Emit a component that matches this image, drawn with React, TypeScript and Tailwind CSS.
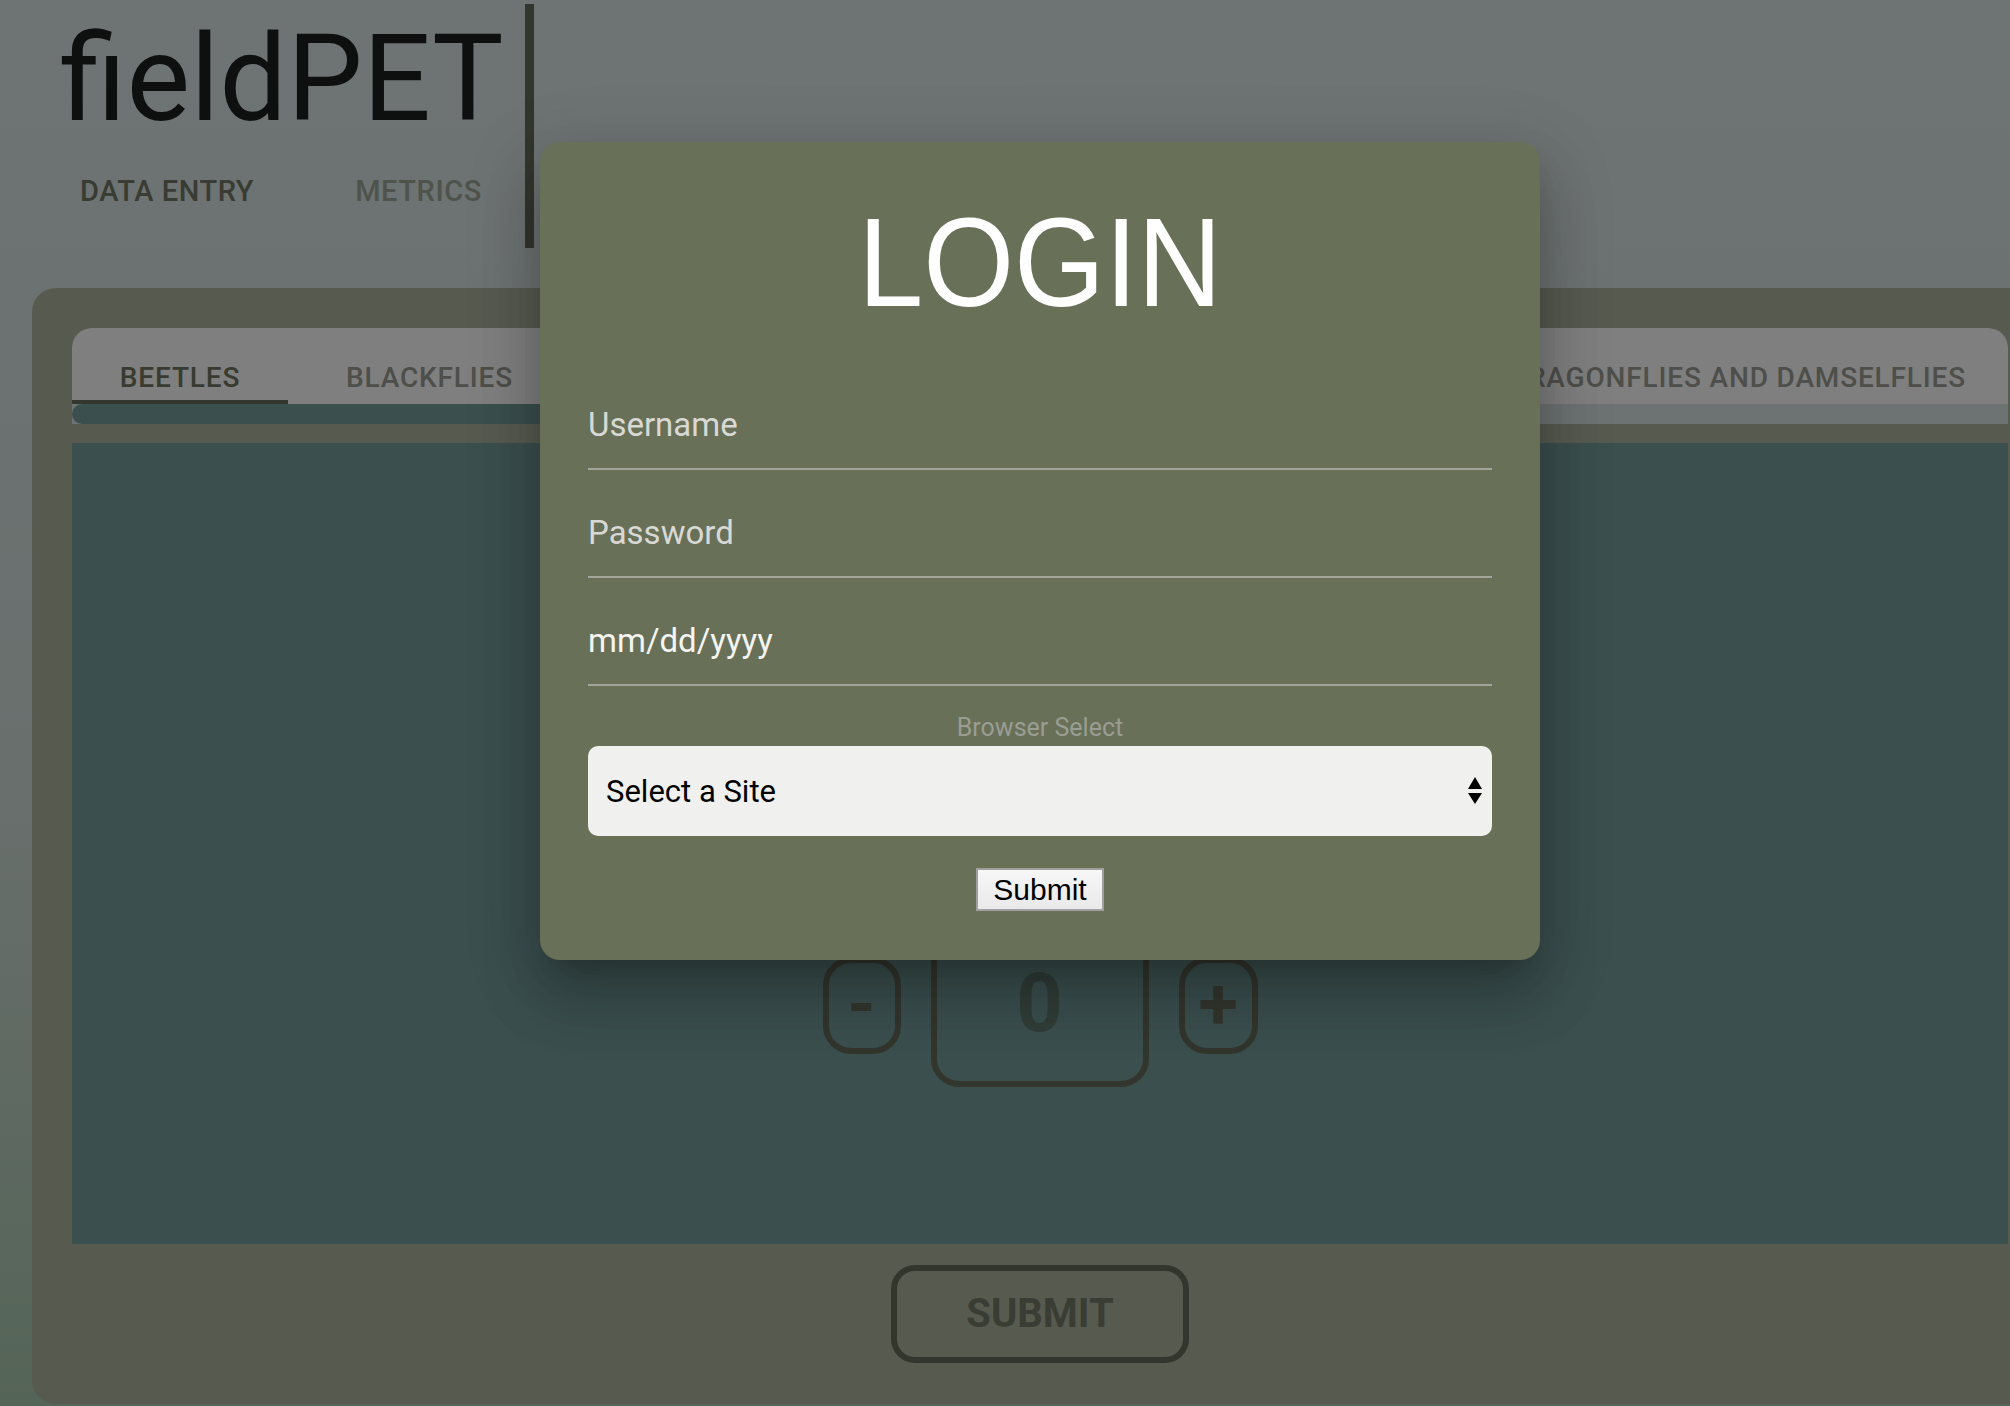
import { useState } from 'react';

const TABS = ['BEETLES', 'BLACKFLIES', 'CADDISFLIES', 'CRANEFLIES', 'DRAGONFLIES AND DAMSELFLIES'];

function SelectArrows() {
  return (
    <svg width="14" height="28" viewBox="0 0 14 28" className="shrink-0">
      <path d="M7 0 L14 12 L0 12 Z" fill="#000" />
      <path d="M0 16 L14 16 L7 27 Z" fill="#000" />
    </svg>
  );
}

function LoginField({ placeholder, light }: { placeholder: string; light?: boolean }) {
  return (
    <div className="h-[108px] flex items-end border-b-2 border-[#a3a49c]">
      <input
        placeholder={placeholder}
        className={`w-full bg-transparent outline-none pb-[24px] text-[33px] leading-none font-['Roboto',sans-serif] ${
          light ? 'placeholder:text-[#f4f4f2]' : 'placeholder:text-[#d8d9d4]'
        }`}
      />
    </div>
  );
}

function LoginModal() {
  return (
    <div className="absolute left-[540px] top-[142px] w-[1000px] h-[818px] rounded-[20px] bg-[#687058] px-[48px] shadow-[0_22px_30px_-14px_rgba(0,0,0,0.2),0_40px_60px_4px_rgba(0,0,0,0.14),0_18px_70px_12px_rgba(0,0,0,0.12)]">
      <h2 className="mt-[57px] text-center text-white text-[127px] leading-none scale-x-[0.92] font-['Liberation_Sans',Arial,sans-serif]">
        LOGIN
      </h2>
      <div className="mt-[36px]">
        <LoginField placeholder="Username" />
        <LoginField placeholder="Password" />
        <LoginField placeholder="mm/dd/yyyy" light />
      </div>
      <div className="mt-[29px] text-center text-[25px] leading-none text-[#9a9d94] font-['Roboto',sans-serif]">
        Browser Select
      </div>
      <div className="mt-[6px] h-[90px] rounded-[10px] bg-[#f0f0ee] pl-[18px] pr-[10px] flex items-center justify-between">
        <span className="text-[31px] leading-none text-black font-['Roboto',sans-serif]">Select a Site</span>
        <SelectArrows />
      </div>
      <div className="mt-[32px] flex justify-center">
        <button className="h-[43px] w-[128px] border-2 border-[#a0a0a0] bg-linear-to-b from-[#f7f7f7] to-[#e9e9e9] text-[30px] leading-none text-black font-['Liberation_Sans',Arial,sans-serif]">
          Submit
        </button>
      </div>
    </div>
  );
}

export default function App() {
  const [count] = useState(0);

  return (
    <div className="relative w-[2010px] h-[1406px] overflow-hidden bg-linear-to-b from-[#dde9e9] via-[#d3dfdb] via-55% to-[#a9c9ae] font-['Roboto',sans-serif]">
      <header className="flex h-[288px]">
        <div className="w-[525px] pl-[60px] pt-[19px]">
          <h1 className="text-[120px] leading-none font-normal text-[#1c201e]">fieldPET</h1>
          <nav className="mt-[38px] ml-[20px] flex gap-[101px] text-[29px] leading-none font-medium tracking-[0.02em]">
            <span className="text-[#727864]">DATA ENTRY</span>
            <span className="text-[#9ca696]">METRICS</span>
          </nav>
        </div>
        <div className="mt-[4px] w-[9px] h-[244px] bg-[#666c5a]" />
      </header>

      <main className="ml-[32px] w-[2016px] h-[1116px] rounded-[24px] bg-[#aeb49e] px-[40px] pt-[40px]">
        <div className="flex h-[76px] rounded-t-[20px] bg-white text-[28px] leading-none font-medium tracking-[0.03em]">
          <div className="w-[216px] pt-[36px] text-center border-b-4 border-[#666c5a] text-[#707660]">{TABS[0]}</div>
          <div className="w-[283px] pt-[36px] text-center border-b-4 border-transparent text-[#9c9e94]">{TABS[1]}</div>
          <div className="flex-1 flex justify-around pt-[36px] text-[#9c9e94]">
            <span>{TABS[2]}</span>
            <span>{TABS[3]}</span>
          </div>
          <div className="pt-[36px] pr-[42px] text-[#9c9e94] whitespace-nowrap">{TABS[4]}</div>
        </div>
        <div className="h-[20px] bg-[#dbe6e6]">
          <div className="w-[1100px] h-full rounded-full bg-[#749e9c]" />
        </div>

        <section className="mt-[19px] h-[801px] bg-[#749e9c] flex flex-col items-center pt-[480px]">
          <div className="flex items-center gap-[30px]">
            <button className="w-[78px] h-[97px] rounded-[28px] border-[6px] border-[#666c5a] text-[72px] leading-none font-bold text-[#666c5a]">
              -
            </button>
            <div className="w-[218px] h-[164px] rounded-[28px] border-[6px] border-[#666c5a] flex justify-center pt-[34px] text-[81px] leading-none font-bold text-[#627a70]">
              {count}
            </div>
            <button className="w-[79px] h-[97px] rounded-[28px] border-[6px] border-[#666c5a] text-[72px] leading-none font-bold text-[#666c5a]">
              +
            </button>
          </div>
        </section>

        <div className="mt-[21px] flex justify-center">
          <button className="w-[298px] h-[98px] rounded-[24px] border-[6px] border-[#666c5a] text-[40px] leading-none font-bold text-[#747a68]">
            SUBMIT
          </button>
        </div>
      </main>

      <div className="absolute inset-0 bg-black/50" />
      <LoginModal />
    </div>
  );
}
